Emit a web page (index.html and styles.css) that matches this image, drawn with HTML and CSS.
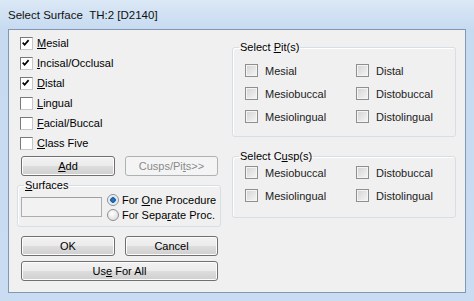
FILE: index.html
```html
<!DOCTYPE html>
<html lang="en">
<head>
    <meta charset="UTF-8">
    <title>Select Surface</title>
    <link rel="stylesheet" href="styles.css">
</head>
<body>
    <div class="window">
        <div class="titlebar">Select Surface&nbsp;&nbsp;TH:2 [D2140]</div>
        <div class="client">
            <div class="left-col">
                <div class="surface-list">
                    <label class="check-row"><span class="box checked"><svg viewBox="0 0 13 13"><path d="M3 6.5 L5.3 9 L10 3.5" /></svg></span><span><u>M</u>esial</span></label>
                    <label class="check-row"><span class="box checked"><svg viewBox="0 0 13 13"><path d="M3 6.5 L5.3 9 L10 3.5" /></svg></span><span><u>I</u>ncisal/Occlusal</span></label>
                    <label class="check-row"><span class="box checked"><svg viewBox="0 0 13 13"><path d="M3 6.5 L5.3 9 L10 3.5" /></svg></span><span><u>D</u>istal</span></label>
                    <label class="check-row"><span class="box"></span><span><u>L</u>ingual</span></label>
                    <label class="check-row"><span class="box"></span><span><u>F</u>acial/Buccal</span></label>
                    <label class="check-row"><span class="box"></span><span><u>C</u>lass Five</span></label>
                </div>
                <div class="btn-row">
                    <button class="btn"><u>A</u>dd</button>
                    <button class="btn" disabled>Cusps/Pi<u>t</u>s&gt;&gt;</button>
                </div>
                <fieldset class="surfaces">
                    <legend><u>S</u>urfaces</legend>
                    <div class="surfaces-body">
                        <input type="text" class="surface-input">
                        <div class="radios">
                            <label class="radio-row"><span class="radio on"></span><span>For <u>O</u>ne Procedure</span></label>
                            <label class="radio-row"><span class="radio"></span><span>For Sepa<u>r</u>ate Proc.</span></label>
                        </div>
                    </div>
                </fieldset>
                <div class="btn-row ok-row">
                    <button class="btn">OK</button>
                    <button class="btn">Cancel</button>
                </div>
                <div class="btn-row all-row">
                    <button class="btn wide">Us<u>e</u> For All</button>
                </div>
            </div>
            <div class="right-col">
                <fieldset class="group pits">
                    <legend>Select <u>P</u>it(s)</legend>
                    <div class="grid">
                        <label class="check-row"><span class="box soft"></span><span>Mesial</span></label>
                        <label class="check-row"><span class="box soft"></span><span>Distal</span></label>
                        <label class="check-row"><span class="box soft"></span><span>Mesiobuccal</span></label>
                        <label class="check-row"><span class="box soft"></span><span>Distobuccal</span></label>
                        <label class="check-row"><span class="box soft"></span><span>Mesiolingual</span></label>
                        <label class="check-row"><span class="box soft"></span><span>Distolingual</span></label>
                    </div>
                </fieldset>
                <fieldset class="group cusps">
                    <legend>Select C<u>u</u>sp(s)</legend>
                    <div class="grid">
                        <label class="check-row"><span class="box soft"></span><span>Mesiobuccal</span></label>
                        <label class="check-row"><span class="box soft"></span><span>Distobuccal</span></label>
                        <label class="check-row"><span class="box soft"></span><span>Mesiolingual</span></label>
                        <label class="check-row"><span class="box soft"></span><span>Distolingual</span></label>
                    </div>
                </fieldset>
            </div>
        </div>
    </div>
</body>
</html>
```

FILE: styles.css
```css
* {
    box-sizing: border-box;
}
body {
    margin: 0;
    font-family: 'Liberation Sans', Arial, sans-serif;
    font-size: 11px;
    color: #000000;
}
.window {
    width: 474px;
    height: 301px;
    background: linear-gradient(#dbe8f6, #c6daf0 30px, #c9dcf1 100%);
    overflow: hidden;
}
.titlebar {
    height: 29px;
    padding: 8px 0 0 8px;
    font-size: 11.5px;
    line-height: 14px;
    color: #111111;
}
.client {
    margin: 0 8px;
    height: 264px;
    background: #f0f0f0;
    border: 1px solid #8197b4;
    display: flex;
    padding: 0 9px 0 8px;
}
.left-col {
    width: 204px;
    padding-top: 3px;
}
.surface-list {
    padding-left: 3px;
}
.check-row {
    display: flex;
    align-items: center;
    height: 20px;
    white-space: nowrap;
}
.box {
    width: 13px;
    height: 13px;
    margin-right: 4px;
    background: #ffffff;
    border: 1px solid;
    border-color: #7a7a7a #c8c8c8 #c8c8c8 #7a7a7a;
    flex-shrink: 0;
}
.box svg {
    display: block;
    width: 11px;
    height: 11px;
}
.box path {
    fill: none;
    stroke: #000000;
    stroke-width: 2;
    transform: translate(-1px, -1px);
}
.box.soft {
    border: 1px solid #8e8f8f;
    background: linear-gradient(135deg, #d3d3d3, #f6f6f6);
    box-shadow: inset 0 0 0 1px #f4f4f4;
    margin-right: 7px;
}
.btn-row {
    display: flex;
    gap: 10px;
    padding-left: 4px;
    margin-top: 3px;
}
.btn {
    width: 94px;
    height: 20px;
    padding: 0;
    font-family: inherit;
    font-size: 11px;
    color: #000000;
    border: 1px solid #707070;
    border-radius: 3px;
    background: linear-gradient(#f2f2f2, #ebebeb 50%, #dddddd 51%, #cfcfcf);
    box-shadow: inset 0 0 0 1px #fcfcfc;
}
.btn + .btn {
    width: 93px;
}
.btn:disabled {
    color: #8a8a8a;
    border-color: #adb2b5;
    background: #f4f4f4;
    box-shadow: none;
}
.btn.wide {
    width: 197px;
}
.surfaces {
    margin: 3px 0 0;
    padding: 0 0 4px 3px;
    width: 204px;
    border: 1px solid #d5dfe5;
    border-radius: 3px;
    box-shadow: inset 1px 1px 0 #ffffff;
}
legend {
    padding: 0 1px;
    line-height: 12px;
    font-size: 11px;
}
.surfaces legend {
    margin-left: 3px;
}
.surfaces-body {
    display: flex;
    align-items: center;
    padding-top: 1px;
}
.surface-input {
    width: 81px;
    height: 20px;
    border: 1px solid #abadb3;
    border-top-color: #a0a0a0;
    background: #f2f2f2;
    margin: 0;
}
.radios {
    margin-left: 5px;
}
.radio-row {
    display: flex;
    align-items: center;
    height: 15px;
    white-space: nowrap;
}
.radio {
    width: 12px;
    height: 12px;
    border-radius: 50%;
    border: 1px solid #8f8f8f;
    background: radial-gradient(circle at 40% 35%, #ffffff, #d6d6d6);
    margin-right: 3px;
}
.radio.on {
    background: radial-gradient(circle, #2f7bc0 0, #1b5b9c 2.5px, #cfe1f3 3px, #f4f8fb 5px);
}
.ok-row {
    margin-top: 9px;
}
.all-row {
    margin-top: 5px;
}
.right-col {
    width: 224px;
    margin-left: 11px;
    padding-top: 11px;
}
.group {
    margin: 0;
    padding: 0 0 8px 12px;
    border: 1px solid #d5dfe5;
    border-radius: 3px;
    box-shadow: inset 1px 1px 0 #ffffff;
    color: #222222;
}
.group legend {
    color: #000000;
    margin-left: -6px;
}
.grid {
    display: grid;
    grid-template-columns: 111px 1fr;
}
.pits .grid {
    padding-top: 6px;
}
.pits .check-row {
    height: 23px;
}
.cusps {
    margin-top: 13px;
    padding-bottom: 10px;
}
.cusps .grid {
    margin-top: -1px;
}
.cusps .check-row {
    height: 23px;
}
```
